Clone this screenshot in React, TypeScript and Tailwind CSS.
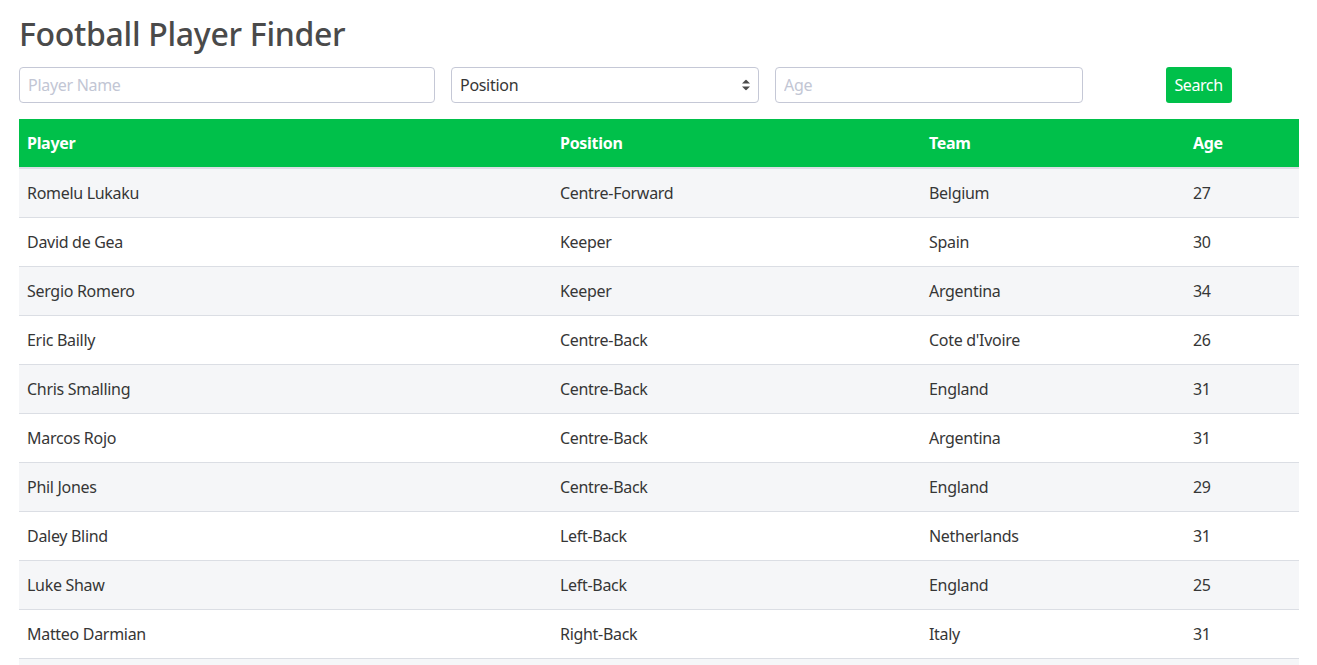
import { useState } from 'react'

type Player = {
  name: string
  position: string
  team: string
  age: number
}

const players: Player[] = [
  { name: 'Romelu Lukaku', position: 'Centre-Forward', team: 'Belgium', age: 27 },
  { name: 'David de Gea', position: 'Keeper', team: 'Spain', age: 30 },
  { name: 'Sergio Romero', position: 'Keeper', team: 'Argentina', age: 34 },
  { name: 'Eric Bailly', position: 'Centre-Back', team: "Cote d'Ivoire", age: 26 },
  { name: 'Chris Smalling', position: 'Centre-Back', team: 'England', age: 31 },
  { name: 'Marcos Rojo', position: 'Centre-Back', team: 'Argentina', age: 31 },
  { name: 'Phil Jones', position: 'Centre-Back', team: 'England', age: 29 },
  { name: 'Daley Blind', position: 'Left-Back', team: 'Netherlands', age: 31 },
  { name: 'Luke Shaw', position: 'Left-Back', team: 'England', age: 25 },
  { name: 'Matteo Darmian', position: 'Right-Back', team: 'Italy', age: 31 },
  { name: 'Antonio Valencia', position: 'Right-Back', team: 'Ecuador', age: 35 },
]

const inputClass =
  'h-9 shrink-0 rounded-[4px] border border-[#c5c8d6] bg-white px-[8px] text-[16px] tracking-[-0.3px] text-[#363636] placeholder:text-[#c2c6d4] outline-none'

const cell = 'h-[49px] border-b border-[#dbdee4] px-2 text-[#363636]'
const head = 'h-[49px] border-b-2 border-[#dbdee4] px-2 text-left font-bold'

export default function App() {
  const [name, setName] = useState('')
  const [age, setAge] = useState('')

  return (
    <div className="min-h-screen bg-white font-['Noto_Sans',sans-serif] text-[#4a4a4a]">
      <div className="px-[19px] pt-[14px]">
        <h1 className="text-[32px] font-medium leading-[40px] tracking-[-0.3px] text-[#4a4a4a]">
          Football Player Finder
        </h1>

        <div className="mt-[13px] flex items-center">
          <input
            value={name}
            onChange={(e) => setName(e.target.value)}
            placeholder="Player Name"
            className={`${inputClass} w-[416px]`}
          />
          <div className="relative ml-4 w-[308px] shrink-0">
            <select className={`${inputClass} w-full appearance-none pr-8`}>
              <option>Position</option>
              <option>Keeper</option>
              <option>Centre-Back</option>
              <option>Centre-Forward</option>
            </select>
            <svg
              className="pointer-events-none absolute right-[9px] top-1/2 -translate-y-1/2"
              width="8"
              height="11"
              viewBox="0 0 8 11"
            >
              <path d="M4 0 L8 4 L0 4 Z M0 7 L8 7 L4 11 Z" fill="#4a4a4a" />
            </svg>
          </div>
          <input
            value={age}
            onChange={(e) => setAge(e.target.value)}
            placeholder="Age"
            className={`${inputClass} ml-4 w-[308px]`}
          />
          <div className="ml-4 flex w-[200px] justify-center">
            <button className="h-9 w-[66px] rounded-[3px] bg-[#00c04a] text-[16px] tracking-[-0.4px] text-white">
              Search
            </button>
          </div>
        </div>

        <table className="mt-4 w-[1280px] table-fixed border-collapse text-[16px] tracking-[-0.3px]">
          <colgroup>
            <col className="w-[533px]" />
            <col className="w-[369px]" />
            <col className="w-[264px]" />
            <col className="w-[114px]" />
          </colgroup>
          <thead>
            <tr className="bg-[#00c04a] text-white">
              <th className={head}>Player</th>
              <th className={head}>Position</th>
              <th className={head}>Team</th>
              <th className={head}>Age</th>
            </tr>
          </thead>
          <tbody>
            {players.map((p, i) => (
              <tr key={p.name} className={i % 2 === 0 ? 'bg-[#f5f6f8]' : 'bg-white'}>
                <td className={cell}>{p.name}</td>
                <td className={cell}>{p.position}</td>
                <td className={cell}>{p.team}</td>
                <td className={cell}>{p.age}</td>
              </tr>
            ))}
          </tbody>
        </table>
      </div>
    </div>
  )
}
